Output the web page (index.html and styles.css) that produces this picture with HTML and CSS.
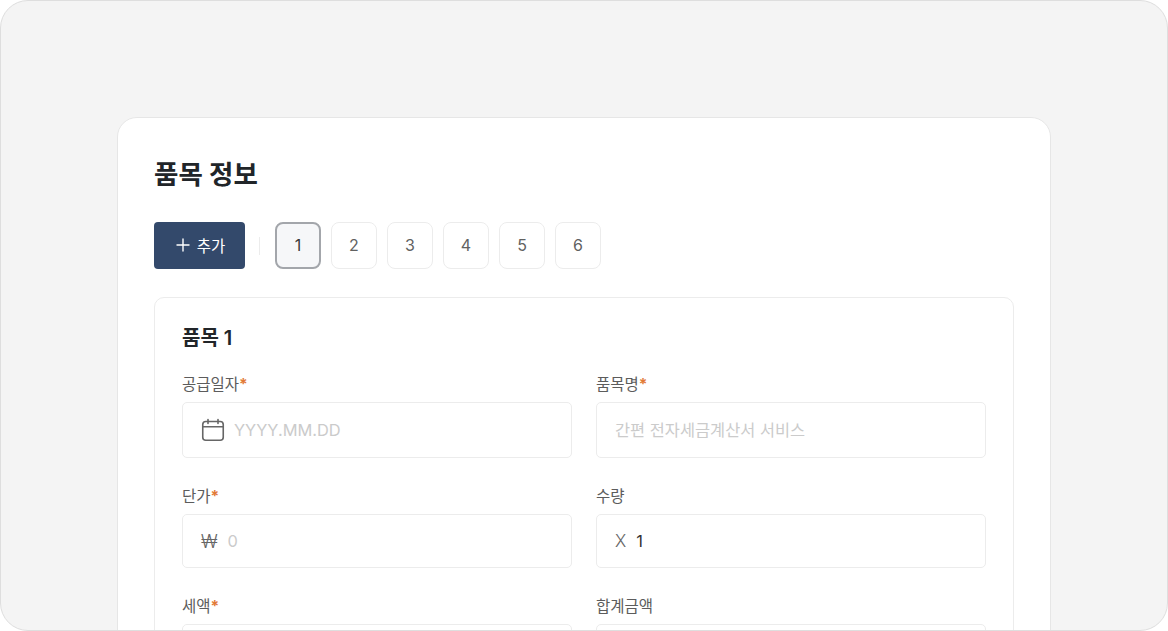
FILE: index.html
```html
<!DOCTYPE html>
<html lang="ko">
<head>
    <meta charset="UTF-8">
    <meta name="viewport" content="width=device-width, initial-scale=1.0">
    <title>품목 정보</title>
    <link rel="stylesheet" href="styles.css">
</head>
<body>
    <div class="frame">
        <div class="card">
            <h1>품목 정보</h1>

            <div class="toolbar">
                <button class="add-btn">
                    <svg width="14" height="14" viewBox="0 0 14 14" fill="none" stroke="#fff" stroke-width="1.4" stroke-linecap="round">
                        <path d="M7 1v12M1 7h12"/>
                    </svg>
                    추가
                </button>
                <span class="divider"></span>
                <button class="page-btn active">1</button>
                <button class="page-btn">2</button>
                <button class="page-btn">3</button>
                <button class="page-btn">4</button>
                <button class="page-btn">5</button>
                <button class="page-btn">6</button>
            </div>

            <div class="panel">
                <h2>품목 1</h2>
                <div class="form-grid">
                    <div class="field">
                        <label>공급일자<span class="req">*</span></label>
                        <div class="input-box tall">
                            <svg class="cal-icon" width="24" height="24" viewBox="0 0 24 24" fill="none" stroke="#666" stroke-width="1.6" stroke-linecap="round" stroke-linejoin="round">
                                <rect x="1.75" y="3.5" width="20.5" height="18.75" rx="3"/>
                                <path d="M1.75 8.8h20.5M7 1.5v4M17 1.5v4"/>
                            </svg>
                            <input type="text" placeholder="YYYY.MM.DD">
                        </div>
                    </div>
                    <div class="field">
                        <label>품목명<span class="req">*</span></label>
                        <div class="input-box tall">
                            <input type="text" placeholder="간편 전자세금계산서 서비스">
                        </div>
                    </div>
                    <div class="field">
                        <label>단가<span class="req">*</span></label>
                        <div class="input-box">
                            <span class="prefix">₩</span>
                            <input type="text" placeholder="0">
                        </div>
                    </div>
                    <div class="field">
                        <label>수량</label>
                        <div class="input-box">
                            <span class="prefix times">X</span>
                            <input type="text" value="1">
                        </div>
                    </div>
                    <div class="field">
                        <label>세액<span class="req">*</span></label>
                        <div class="input-box"></div>
                    </div>
                    <div class="field">
                        <label>합계금액</label>
                        <div class="input-box"></div>
                    </div>
                </div>
            </div>
        </div>
    </div>
</body>
</html>
```

FILE: styles.css
```css
* {
    box-sizing: border-box;
}
html, body {
    margin: 0;
    padding: 0;
    background-color: #fff;
}
body {
    font-family: Inter, "Noto Sans CJK KR", sans-serif;
    height: 631px;
    overflow: hidden;
}
.frame {
    height: 631px;
    overflow: hidden;
    background-color: #f4f4f4;
    border: 1px solid #dedede;
    border-radius: 28px;
    padding: 116px 116px 0;
}
.card {
    width: 934px;
    background-color: #fff;
    border: 1px solid #e6e6e6;
    border-radius: 20px;
    padding: 37px 36px 40px;
}
h1 {
    margin: 0 0 29px;
    font-size: 26.5px;
    line-height: 38px;
    font-weight: 700;
    color: #212529;
}
.toolbar {
    display: flex;
    align-items: center;
    gap: 10px;
    margin-bottom: 28px;
}
.add-btn {
    display: flex;
    align-items: center;
    justify-content: center;
    gap: 7px;
    width: 91px;
    height: 47px;
    padding: 0 0 2px 2px;
    background-color: #33496b;
    color: #fff;
    border: none;
    border-radius: 4px;
    font-family: inherit;
    font-size: 15.5px;
    cursor: pointer;
}
.divider {
    width: 1px;
    height: 18px;
    background-color: #ececec;
    margin: 0 5px 0 4px;
}
.page-btn {
    width: 46px;
    height: 47px;
    padding: 0 0 2px;
    background-color: #fff;
    color: #616161;
    border: 1px solid #ececec;
    border-radius: 8px;
    font-family: inherit;
    font-size: 16px;
    cursor: pointer;
}
.page-btn.active {
    background-color: #f6f7f9;
    border: 2px solid #a3a6ab;
    color: #3a3a3a;
}
.panel {
    border: 1px solid #ececec;
    border-radius: 10px;
    padding: 26px 27px 40px;
}
h2 {
    margin: 0 0 22px;
    font-size: 20px;
    line-height: 28px;
    font-weight: 600;
    color: #212529;
}
.form-grid {
    display: grid;
    grid-template-columns: 390px 390px;
    column-gap: 24px;
    row-gap: 28px;
}
label {
    display: block;
    font-size: 15.5px;
    line-height: 22px;
    color: #5c5c5c;
    margin-bottom: 6px;
}
.req {
    color: #e27a36;
    font-weight: 700;
}
.input-box {
    display: flex;
    align-items: center;
    height: 54px;
    border: 1px solid #ececec;
    border-radius: 5px;
    padding: 0 18px;
    background-color: #fff;
}
.input-box.tall {
    height: 56px;
}
.input-box input {
    flex: 1;
    min-width: 0;
    border: none;
    outline: none;
    background: none;
    padding: 0;
    font-family: inherit;
    font-size: 16.4px;
    color: #333;
}
.input-box input::placeholder {
    color: #cbcbcb;
}
.cal-icon {
    flex-shrink: 0;
    margin-right: 9px;
}
.prefix {
    font-size: 18px;
    font-weight: 300;
    color: #666;
    margin-right: 10px;
}
.prefix.times {
    font-size: 17px;
    margin-right: 10px;
}
```
